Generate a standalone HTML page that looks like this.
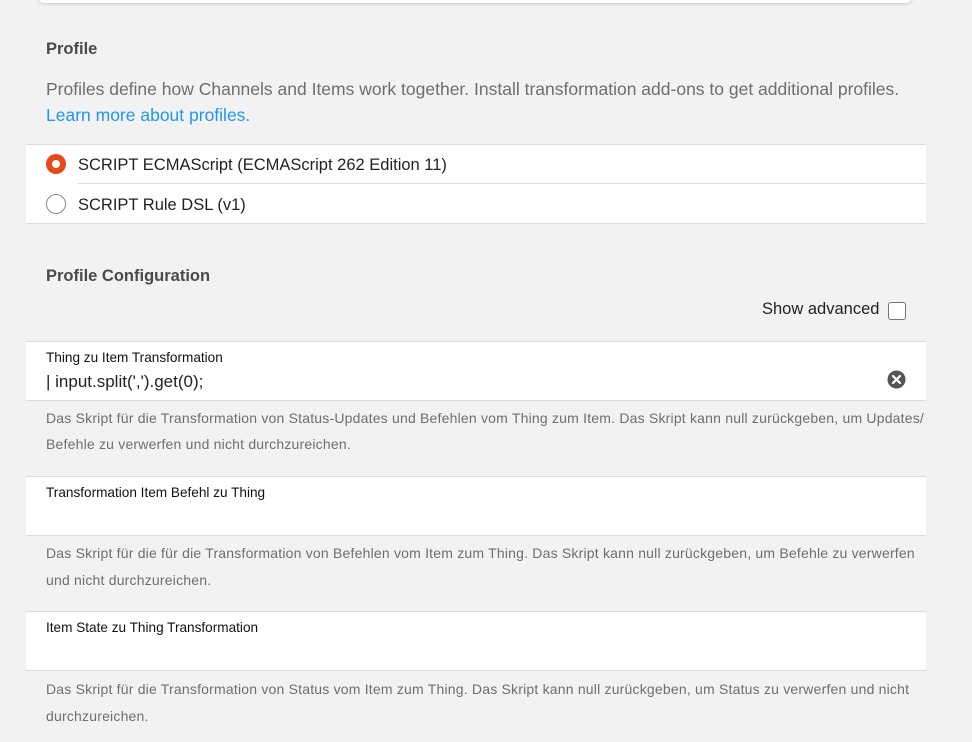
<!DOCTYPE html>
<html><head><style>
body{margin:0;background:#f2f2f2;font-family:"Liberation Sans",sans-serif;width:972px;height:742px;overflow:hidden;position:relative;color:#222}
.abs{position:absolute;white-space:nowrap}
.card{position:absolute;left:38px;top:-10px;width:874px;height:13px;background:#fff;border-radius:0 0 6px 6px;box-shadow:0 1px 3px rgba(0,0,0,.18)}
.h{font-size:16.5px;font-weight:bold;color:#4a4a4a}
.d{font-size:17.5px;color:#6e6e6e}
.panel{position:absolute;left:26px;width:900px;background:#fff;border-top:1px solid #ddd;border-bottom:1px solid #ddd}
.help{font-size:14px;letter-spacing:0.2px;color:#6e6e6e;left:46px}
.lbl{font-size:13.6px;color:#111}
</style></head><body>
<div class="card"></div>
<div class="abs h" style="left:46px;top:40px">Profile</div>
<div class="abs d" style="left:46px;top:79px">Profiles define how Channels and Items work together. Install transformation add-ons to get additional profiles.</div>
<div class="abs d" style="left:46px;top:105px;color:#2196f3">Learn more about profiles.</div>
<div class="panel" style="top:144px;height:78px"></div>
<div class="abs" style="left:78px;top:183px;width:848px;height:1px;background:#ddd"></div>
<div class="abs" style="left:46px;top:154px;width:20px;height:20px;border-radius:50%;background:#e64a19"></div>
<div class="abs" style="left:52px;top:160px;width:8px;height:8px;border-radius:50%;background:#fff"></div>
<div class="abs" style="left:78px;top:156px;font-size:16.5px">SCRIPT ECMAScript (ECMAScript 262 Edition 11)</div>
<div class="abs" style="left:46px;top:194px;width:18px;height:18px;border-radius:50%;border:1px solid #888;background:#fff"></div>
<div class="abs" style="left:78px;top:196px;font-size:16.5px">SCRIPT Rule DSL (v1)</div>
<div class="abs h" style="left:46px;top:267px">Profile Configuration</div>
<div class="abs" style="left:762px;top:300px;font-size:16.5px">Show advanced</div>
<div class="abs" style="left:888px;top:302px;width:16px;height:16px;border:1px solid #777;border-radius:3px;background:#fff"></div>

<div class="panel" style="top:341px;height:58px"></div>
<div class="abs lbl" style="left:46px;top:350px">Thing zu Item Transformation</div>
<div class="abs" style="left:46px;top:372px;font-size:17px">| input.split(',').get(0);</div>
<svg class="abs" style="left:887px;top:370px" width="19" height="19" viewBox="0 0 19 19"><circle cx="9.5" cy="9.5" r="9" fill="#555"/><path d="M6 6L13 13M13 6L6 13" stroke="#fff" stroke-width="2.2" stroke-linecap="round"/></svg>
<div class="abs help" style="top:410px">Das Skript für die Transformation von Status-Updates und Befehlen vom Thing zum Item. Das Skript kann null zurückgeben, um Updates/</div>
<div class="abs help" style="top:436px">Befehle zu verwerfen und nicht durchzureichen.</div>

<div class="panel" style="top:476px;height:58px"></div>
<div class="abs lbl" style="left:46px;top:485px">Transformation Item Befehl zu Thing</div>
<div class="abs help" style="top:545px">Das Skript für die für die Transformation von Befehlen vom Item zum Thing. Das Skript kann null zurückgeben, um Befehle zu verwerfen</div>
<div class="abs help" style="top:572px">und nicht durchzureichen.</div>

<div class="panel" style="top:611px;height:58px"></div>
<div class="abs lbl" style="left:46px;top:620px">Item State zu Thing Transformation</div>
<div class="abs help" style="top:681px">Das Skript für die Transformation von Status vom Item zum Thing. Das Skript kann null zurückgeben, um Status zu verwerfen und nicht</div>
<div class="abs help" style="top:708px">durchzureichen.</div>
</body></html>
